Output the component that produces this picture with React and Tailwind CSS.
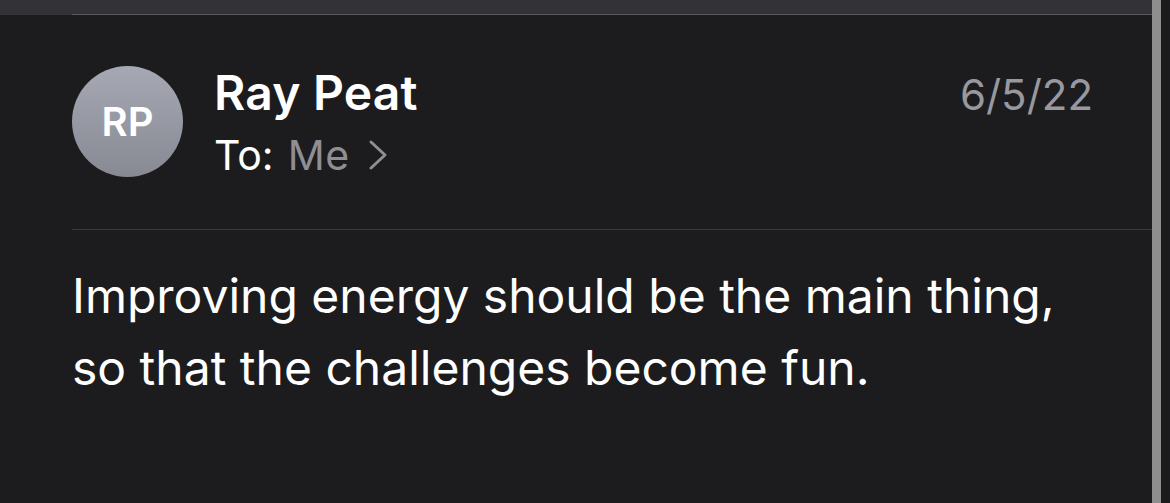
export default function App() {
    return (
        <div
            className="flex h-[503px] w-[1170px] overflow-hidden bg-[#1c1c1e] text-white"
            style={{ fontFamily: 'Inter, "Noto Sans", sans-serif' }}
        >
            <div className="flex flex-1 flex-col">
                {/* top bar */}
                <div className="h-[14px] bg-[#323237]" />
                <div className="flex h-px">
                    <div className="w-[72px] bg-[#323237]" />
                    <div className="flex-1 bg-[#5a5a5e]" />
                </div>

                {/* header */}
                <div className="flex h-[214px] items-start pl-[72px] pr-[68px] pt-[51px]">
                    <div className="flex h-[111px] w-[111px] shrink-0 items-center justify-center rounded-full bg-gradient-to-b from-[#a6a9b3] to-[#878a93]">
                        <span className="text-[40px] font-semibold leading-none">
                            RP
                        </span>
                    </div>
                    <div className="ml-[31px] mt-[-2px] flex flex-1 flex-col">
                        <div className="flex items-start justify-between">
                            <span className="text-[48px] font-semibold leading-[58px] tracking-[0.2px]">
                                Ray Peat
                            </span>
                            <span className="mt-[5px] text-[42px] leading-[52px] text-[#98989e]">
                                6/5/22
                            </span>
                        </div>
                        <div className="mt-[10px] flex items-center text-[41px] leading-[46px]">
                            <span>To:</span>
                            <span className="ml-[14px] tracking-[0.5px] text-[#8e8e93]">
                                Me
                            </span>
                            <svg
                                className="ml-[18px]"
                                width="20"
                                height="32"
                                viewBox="0 0 20 32"
                                fill="none"
                            >
                                <path
                                    d="M3 3 L17 16 L3 29"
                                    stroke="#8e8e93"
                                    strokeWidth="3"
                                    strokeLinecap="round"
                                    strokeLinejoin="round"
                                />
                            </svg>
                        </div>
                    </div>
                </div>

                {/* divider */}
                <div className="ml-[72px] h-px bg-[#3a3a3c]" />

                {/* body */}
                <div className="pl-[72px] pt-[30px] text-[48px] leading-[72px]">
                    <p>Improving energy should be the main thing,</p>
                    <p>so that the challenges become fun.</p>
                </div>
            </div>

            {/* scrollbar */}
            <div className="ml-[-9px] flex w-[18px] shrink-0">
                <div className="w-[9px] bg-[#8e8e8e]" />
                <div className="w-[9px] bg-[#1c1c1e]" />
            </div>
        </div>
    );
}
